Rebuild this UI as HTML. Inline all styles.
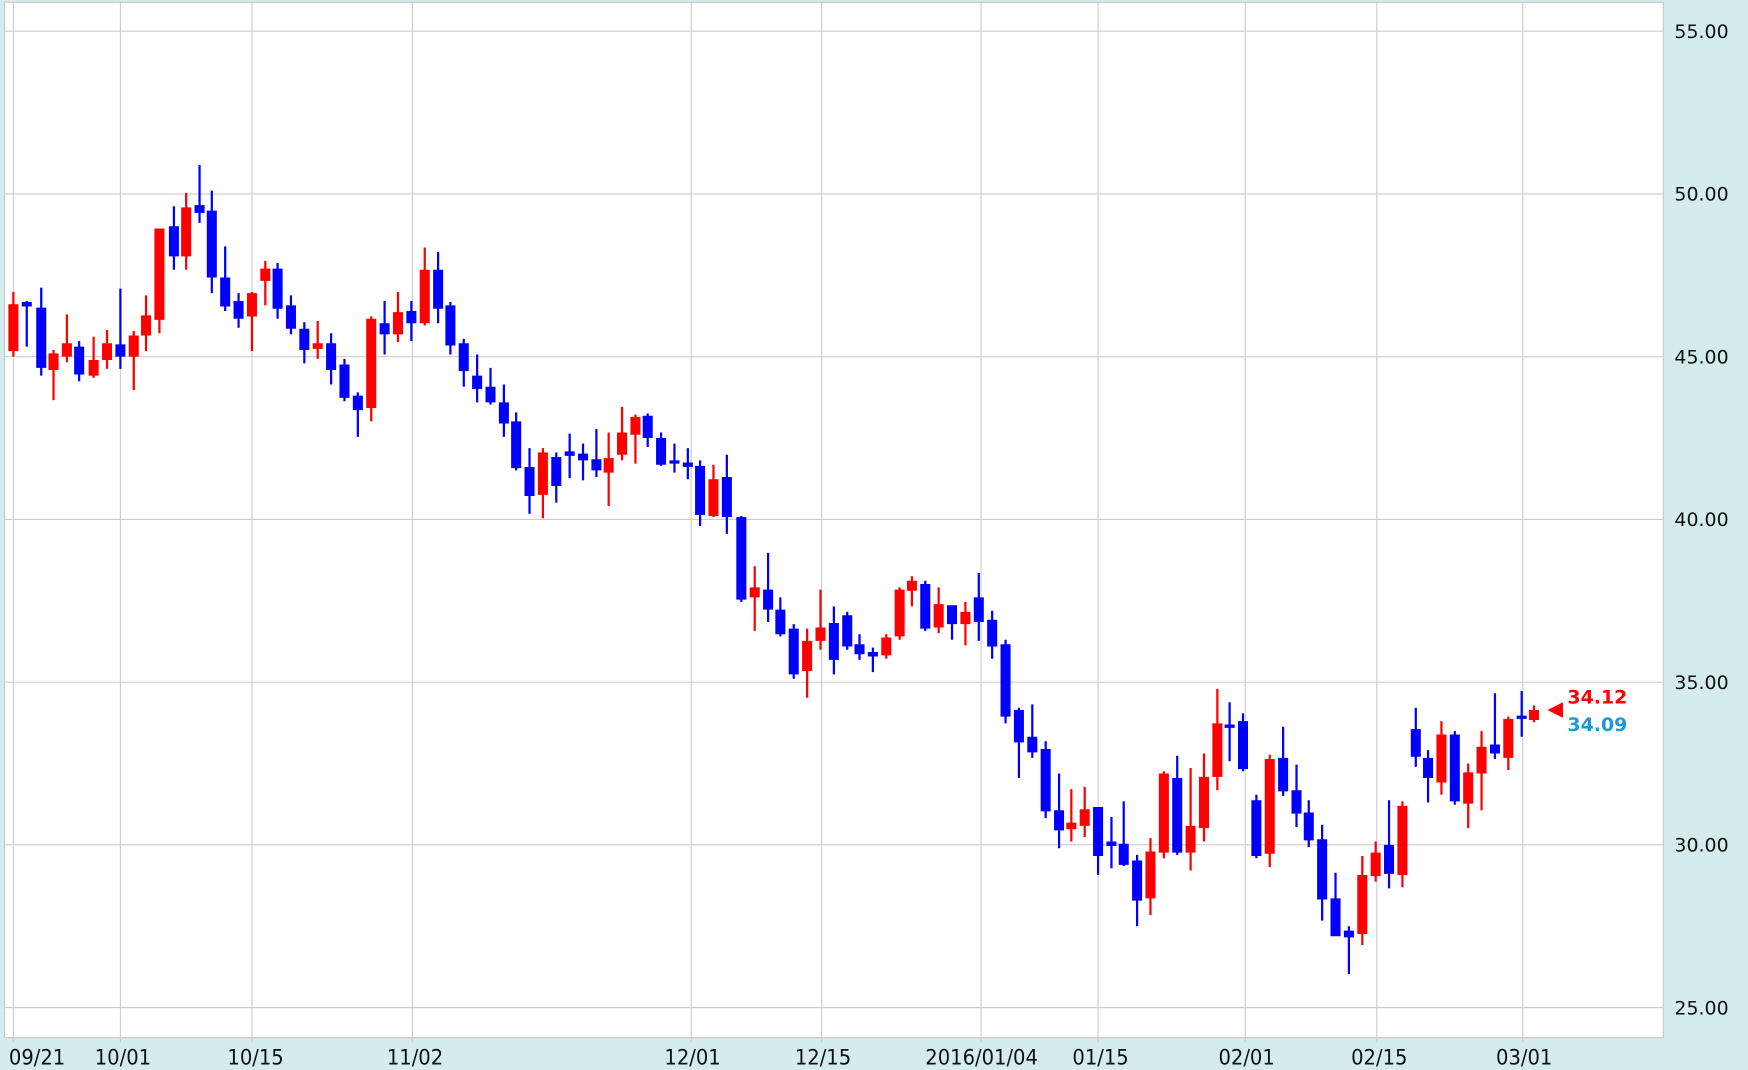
<!DOCTYPE html>
<html><head><meta charset="utf-8"><style>
html,body{margin:0;padding:0;background:#d4ecec;overflow:hidden}
svg{display:block}
.r{fill:#ff0000;stroke:#ff0000;stroke-width:2}
.b{fill:#0000ff;stroke:#0000ff;stroke-width:2}
.g{stroke:#cccccc;stroke-width:1;fill:none}
.ax{font-family:"DejaVu Sans","Liberation Sans",sans-serif;font-size:17px;fill:#111}
.bx{font-family:"DejaVu Sans Condensed","DejaVu Sans","Liberation Sans",sans-serif;font-size:19.5px;fill:#111}
</style></head><body>
<svg width="1748" height="1070" viewBox="0 0 1568 960" preserveAspectRatio="none" xmlns="http://www.w3.org/2000/svg">
<rect x="0" y="0" width="1568" height="960" fill="#d4ecec"/>
<rect x="4" y="2" width="1488" height="929" fill="#fff" stroke="#c8c8c8" stroke-width="1"/>
<path class="g" d="M4 28H1492M4 174H1492M4 320H1492M4 466H1492M4 612H1492M4 758H1492M4 904H1492M12 2V935M108 2V935M226 2V935M370 2V935M620 2V935M737 2V935M880 2V935M985 2V935M1117 2V935M1235 2V935M1366 2V935"/>
<g class="ax">
<text x="1502" y="34">55.00</text><text x="1502" y="180">50.00</text><text x="1502" y="326">45.00</text><text x="1502" y="472">40.00</text><text x="1502" y="618">35.00</text><text x="1502" y="764">30.00</text><text x="1502" y="910">25.00</text>
</g>
<g class="bx">
<text x="8" y="955">09/21</text><text x="85" y="955">10/01</text><text x="204" y="955">10/15</text><text x="347" y="955">11/02</text><text x="596" y="955">12/01</text><text x="713" y="955">12/15</text><text x="830" y="955">2016/01/04</text><text x="962" y="955">01/15</text><text x="1093" y="955">02/01</text><text x="1212" y="955">02/15</text><text x="1342" y="955">03/01</text>
</g>
<path class="r" d="M12 262V320M8.5 274H15.5V314H8.5Z"/>
<path class="b" d="M24 270V311M20.5 272H27.5V274H20.5Z"/>
<path class="b" d="M37 258V337M33.5 277H40.5V329H33.5Z"/>
<path class="r" d="M48 314V359M44.5 318H51.5V331H44.5Z"/>
<path class="r" d="M60 282V325M56.5 309H63.5V319H56.5Z"/>
<path class="b" d="M71 306V342M67.5 312H74.5V335H67.5Z"/>
<path class="r" d="M84 302V339M80.5 324H87.5V336H80.5Z"/>
<path class="r" d="M96 296V331M92.5 309H99.5V322H92.5Z"/>
<path class="b" d="M108 259V331M104.5 310H111.5V319H104.5Z"/>
<path class="r" d="M120 297V350M116.5 302H123.5V319H116.5Z"/>
<path class="r" d="M131 265V315M127.5 284H134.5V300H127.5Z"/>
<path class="r" d="M143 205V299M139.5 206H146.5V286H139.5Z"/>
<path class="b" d="M156 185V242M152.5 204H159.5V229H152.5Z"/>
<path class="r" d="M167 173V242M163.5 187H170.5V229H163.5Z"/>
<path class="b" d="M179 148V200M175.5 185H182.5V190H175.5Z"/>
<path class="b" d="M190 171V263M186.5 190H193.5V248H186.5Z"/>
<path class="b" d="M202 221V279M198.5 250H205.5V274H198.5Z"/>
<path class="b" d="M214 263V294M210.5 271H217.5V285H210.5Z"/>
<path class="r" d="M226 262V315M222.5 264H229.5V283H222.5Z"/>
<path class="r" d="M238 234V274M234.5 242H241.5V251H234.5Z"/>
<path class="b" d="M249 236V286M245.5 242H252.5V276H245.5Z"/>
<path class="b" d="M261 265V300M257.5 275H264.5V294H257.5Z"/>
<path class="b" d="M273 289V326M269.5 296H276.5V313H269.5Z"/>
<path class="r" d="M285 288V322M281.5 309H288.5V312H281.5Z"/>
<path class="b" d="M297 299V345M293.5 309H300.5V331H293.5Z"/>
<path class="b" d="M309 322V360M305.5 328H312.5V356H305.5Z"/>
<path class="b" d="M321 352V392M317.5 356H324.5V367H317.5Z"/>
<path class="r" d="M333 284V378M329.5 287H336.5V365H329.5Z"/>
<path class="b" d="M345 270V318M341.5 291H348.5V299H341.5Z"/>
<path class="r" d="M357 262V307M353.5 281H360.5V299H353.5Z"/>
<path class="b" d="M369 270V306M365.5 280H372.5V289H365.5Z"/>
<path class="r" d="M381 222V292M377.5 243H384.5V289H377.5Z"/>
<path class="b" d="M393 226V290M389.5 243H396.5V276H389.5Z"/>
<path class="b" d="M404 271V318M400.5 275H407.5V309H400.5Z"/>
<path class="b" d="M416 304V347M412.5 309H419.5V332H412.5Z"/>
<path class="b" d="M428 318V361M424.5 338H431.5V348H424.5Z"/>
<path class="b" d="M440 330V363M436.5 348H443.5V360H436.5Z"/>
<path class="b" d="M452 345V392M448.5 362H455.5V379H448.5Z"/>
<path class="b" d="M463 370V422M459.5 379H466.5V419H459.5Z"/>
<path class="b" d="M475 402V461M471.5 420H478.5V444H471.5Z"/>
<path class="r" d="M487 402V465M483.5 407H490.5V443H483.5Z"/>
<path class="b" d="M499 406V451M495.5 411H502.5V435H495.5Z"/>
<path class="b" d="M511 389V429M507.5 406H514.5V408H507.5Z"/>
<path class="b" d="M523 398V431M519.5 408H526.5V412H519.5Z"/>
<path class="b" d="M535 385V428M531.5 413H538.5V421H531.5Z"/>
<path class="r" d="M546 388V454M542.5 412H549.5V423H542.5Z"/>
<path class="r" d="M558 365V413M554.5 389H561.5V407H554.5Z"/>
<path class="r" d="M570 372V416M566.5 375H573.5V389H566.5Z"/>
<path class="b" d="M581 371V401M577.5 374H584.5V392H577.5Z"/>
<path class="b" d="M593 388V418M589.5 394H596.5V416H589.5Z"/>
<path class="b" d="M605 398V424M601.5 414H608.5V415H601.5Z"/>
<path class="b" d="M617 402V430M613.5 416H620.5V418H613.5Z"/>
<path class="b" d="M628 413V472M624.5 419H631.5V461H624.5Z"/>
<path class="r" d="M640 417V464M636.5 431H643.5V462H636.5Z"/>
<path class="b" d="M652 408V479M648.5 429H655.5V463H648.5Z"/>
<path class="b" d="M665 463V540M661.5 465H668.5V537H661.5Z"/>
<path class="r" d="M677 508V566M673.5 528H680.5V535H673.5Z"/>
<path class="b" d="M689 496V558M685.5 530H692.5V546H685.5Z"/>
<path class="b" d="M700 536V571M696.5 548H703.5V568H696.5Z"/>
<path class="b" d="M712 560V609M708.5 565H715.5V604H708.5Z"/>
<path class="r" d="M724 564V626M720.5 576H727.5V601H720.5Z"/>
<path class="r" d="M736 529V583M732.5 564H739.5V574H732.5Z"/>
<path class="b" d="M748 544V605M744.5 560H751.5V591H744.5Z"/>
<path class="b" d="M760 549V583M756.5 553H763.5V579H756.5Z"/>
<path class="b" d="M771 569V592M767.5 579H774.5V586H767.5Z"/>
<path class="b" d="M783 581V603M779.5 586H786.5V588H779.5Z"/>
<path class="r" d="M795 569V591M791.5 573H798.5V587H791.5Z"/>
<path class="r" d="M807 527V574M803.5 530H810.5V570H803.5Z"/>
<path class="r" d="M818 517V544M814.5 522H821.5V529H814.5Z"/>
<path class="b" d="M830 521V566M826.5 525H833.5V563H826.5Z"/>
<path class="r" d="M842 527V568M838.5 543H845.5V562H838.5Z"/>
<path class="b" d="M854 543V574M850.5 544H857.5V559H850.5Z"/>
<path class="r" d="M866 540V579M862.5 550H869.5V559H862.5Z"/>
<path class="b" d="M878 514V575M874.5 537H881.5V557H874.5Z"/>
<path class="b" d="M890 548V591M886.5 557H893.5V579H886.5Z"/>
<path class="b" d="M902 574V649M898.5 579H905.5V642H898.5Z"/>
<path class="b" d="M914 635V698M910.5 638H917.5V665H910.5Z"/>
<path class="b" d="M926 632V680M922.5 662H929.5V674H922.5Z"/>
<path class="b" d="M938 665V734M934.5 673H941.5V727H934.5Z"/>
<path class="b" d="M950 694V761M946.5 728H953.5V744H946.5Z"/>
<path class="r" d="M961 708V755M957.5 739H964.5V743H957.5Z"/>
<path class="r" d="M973 706V751M969.5 727H976.5V740H969.5Z"/>
<path class="b" d="M985 724V785M981.5 725H988.5V767H981.5Z"/>
<path class="b" d="M997 733V779M993.5 756H1000.5V758H993.5Z"/>
<path class="b" d="M1008 719V777M1004.5 758H1011.5V775H1004.5Z"/>
<path class="b" d="M1020 767V831M1016.5 773H1023.5V807H1016.5Z"/>
<path class="r" d="M1032 752V821M1028.5 765H1035.5V805H1028.5Z"/>
<path class="r" d="M1044 692V770M1040.5 695H1047.5V764H1040.5Z"/>
<path class="b" d="M1056 678V767M1052.5 699H1059.5V764H1052.5Z"/>
<path class="r" d="M1068 689V781M1064.5 742H1071.5V764H1064.5Z"/>
<path class="r" d="M1080 676V755M1076.5 698H1083.5V742H1076.5Z"/>
<path class="r" d="M1092 618V709M1088.5 650H1095.5V696H1088.5Z"/>
<path class="b" d="M1103 630V683M1099.5 651H1106.5V652H1099.5Z"/>
<path class="b" d="M1115 640V692M1111.5 648H1118.5V689H1111.5Z"/>
<path class="b" d="M1127 713V770M1123.5 719H1130.5V767H1123.5Z"/>
<path class="r" d="M1139 677V778M1135.5 682H1142.5V765H1135.5Z"/>
<path class="b" d="M1151 652V714M1147.5 681H1154.5V709H1147.5Z"/>
<path class="b" d="M1163 686V742M1159.5 710H1166.5V729H1159.5Z"/>
<path class="b" d="M1174 718V760M1170.5 730H1177.5V753H1170.5Z"/>
<path class="b" d="M1186 740V826M1182.5 754H1189.5V806H1182.5Z"/>
<path class="b" d="M1198 783V840M1194.5 807H1201.5V839H1194.5Z"/>
<path class="b" d="M1210 831V874M1206.5 836H1213.5V840H1206.5Z"/>
<path class="r" d="M1222 768V848M1218.5 786H1225.5V837H1218.5Z"/>
<path class="r" d="M1234 755V791M1230.5 766H1237.5V785H1230.5Z"/>
<path class="b" d="M1246 718V797M1242.5 759H1249.5V783H1242.5Z"/>
<path class="r" d="M1258 719V796M1254.5 724H1261.5V784H1254.5Z"/>
<path class="b" d="M1270 635V688M1266.5 655H1273.5V678H1266.5Z"/>
<path class="b" d="M1281 673V720M1277.5 681H1284.5V697H1277.5Z"/>
<path class="r" d="M1293 647V713M1289.5 660H1296.5V701H1289.5Z"/>
<path class="b" d="M1305 656V722M1301.5 660H1308.5V718H1301.5Z"/>
<path class="r" d="M1317 685V743M1313.5 694H1320.5V720H1313.5Z"/>
<path class="r" d="M1329 656V727M1325.5 671H1332.5V693H1325.5Z"/>
<path class="b" d="M1341 622V681M1337.5 669H1344.5V675H1337.5Z"/>
<path class="r" d="M1353 643V691M1349.5 646H1356.5V679H1349.5Z"/>
<path class="b" d="M1365 620V661M1361.5 643H1368.5V644H1361.5Z"/>
<path class="r" d="M1376 633V648M1372.5 638H1379.5V645H1372.5Z"/>
<path d="M1388 637L1402 630V644Z" fill="#ff0000"/>
<text x="1406" y="631" font-family="DejaVu Sans,Liberation Sans,sans-serif" font-size="17" font-weight="bold" fill="#ff0000">34.12</text>
<text x="1406" y="656" font-family="DejaVu Sans,Liberation Sans,sans-serif" font-size="17" font-weight="bold" fill="#1a9ad6">34.09</text>
</svg>
</body></html>
